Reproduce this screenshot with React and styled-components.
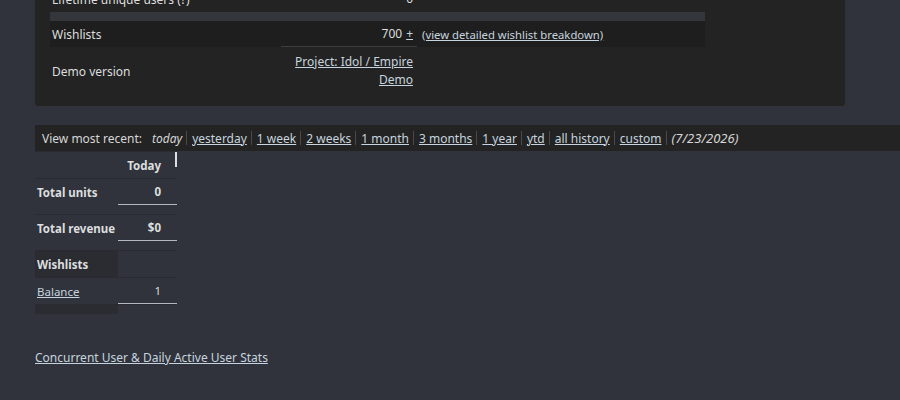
import styled, { createGlobalStyle } from 'styled-components'

const GlobalStyle = createGlobalStyle`
  html, body {
    margin: 0;
    padding: 0;
    background: #30333b;
    overflow: hidden;
  }
  body {
    font-family: 'Noto Sans', 'Open Sans', sans-serif;
    font-size: 12px;
    color: #dcdedf;
  }
`

const ranges = ['yesterday', '1 week', '2 weeks', '1 month', '3 months', '1 year', 'ytd', 'all history', 'custom']

export default function App() {
  return (
    <>
      <GlobalStyle />
      <Page>
        <Panel>
          <InfoTable>
            <InfoRow>
              <InfoLabel>Lifetime unique users (?)</InfoLabel>
              <InfoValue>0</InfoValue>
              <InfoExtra />
            </InfoRow>
            <Strip />
            <InfoRow dark>
              <InfoLabel>Wishlists</InfoLabel>
              <InfoValue inline>
                700 <Link>+</Link>
              </InfoValue>
              <InfoExtra>
                <Link>(view detailed wishlist breakdown)</Link>
              </InfoExtra>
            </InfoRow>
            <InfoRow tall>
              <InfoLabel>Demo version</InfoLabel>
              <InfoValue>
                <Link>Project: Idol / Empire</Link>
                <Link>Demo</Link>
              </InfoValue>
              <InfoExtra />
            </InfoRow>
          </InfoTable>
        </Panel>

        <RangeBar>
          <Lead>View most recent:</Lead>
          <Current>today</Current>
          {ranges.map((r) => (
            <RangeItem key={r}>
              <Link>{r}</Link>
            </RangeItem>
          ))}
          <RangeItem>
            <Current wide>(7/23/2026)</Current>
          </RangeItem>
        </RangeBar>

        <SalesTable>
          <SalesRow>
            <LabelCell />
            <HeadCell>
              <HeadText>Today</HeadText>
              <Marker />
            </HeadCell>
          </SalesRow>
          <SalesRow>
            <LabelCell bold>Total units</LabelCell>
            <ValueCell bold total>0</ValueCell>
          </SalesRow>
          <Spacer />
          <SalesRow>
            <LabelCell bold>Total revenue</LabelCell>
            <ValueCell bold total>$0</ValueCell>
          </SalesRow>
          <Spacer />
          <SalesRow>
            <LabelCell bold shaded>Wishlists</LabelCell>
            <ValueCell />
          </SalesRow>
          <SalesRow>
            <LabelCell><Link>Balance</Link></LabelCell>
            <ValueCell total>1</ValueCell>
          </SalesRow>
          <Footer>
            <LabelCell shaded />
          </Footer>
        </SalesTable>

        <StatsLink>Concurrent User &amp; Daily Active User Stats</StatsLink>
      </Page>
    </>
  )
}

const Page = styled.div`
  margin-top: -14px;
  padding-left: 35px;
`

const Panel = styled.div`
  width: 780px;
  padding: 0 15px 11px;
  background: #232323;
  border-radius: 0 0 3px 3px;
`

const InfoTable = styled.div`
  width: 655px;
`

const InfoRow = styled.div`
  display: flex;
  align-items: center;
  height: ${({ tall }) => (tall ? 48 : 26)}px;
  background: ${({ dark }) => (dark ? '#1e1e1e' : 'transparent')};
`

const InfoLabel = styled.div`
  width: 229px;
  padding-left: 2px;
  white-space: nowrap;
`

const InfoValue = styled.div`
  width: 132px;
  align-self: stretch;
  display: flex;
  flex-direction: ${({ inline }) => (inline ? 'row' : 'column')};
  align-items: ${({ inline }) => (inline ? 'center' : 'flex-end')};
  justify-content: ${({ inline }) => (inline ? 'flex-end' : 'center')};
  gap: ${({ inline }) => (inline ? 4 : 0)}px;
  padding-right: 4px;
  text-align: right;
  line-height: 18px;
  border-bottom: ${({ inline }) => (inline ? '1px solid #3d3d3d' : 'none')};
`

const InfoExtra = styled.div`
  flex: 1;
  padding-left: 5px;
  font-size: 11.3px;
  white-space: nowrap;
`

const Strip = styled.div`
  height: 9px;
  background: #35363b;
`

const Link = styled.a`
  color: #c6d4df;
  text-decoration: underline;
  cursor: pointer;
`

const RangeBar = styled.div`
  margin-top: 19px;
  height: 26px;
  display: flex;
  align-items: center;
  padding-left: 7px;
  background: #232323;
  color: #d6d7d8;
  gap: 4px;
  white-space: nowrap;
`

const Lead = styled.span`
  margin-right: 6px;
`

const Current = styled.span`
  font-style: italic;
  font-size: ${({ wide }) => (wide ? 13 : 12)}px;
`

const RangeItem = styled.span`
  display: flex;
  align-items: center;

  &::before {
    content: '';
    width: 1px;
    height: 14px;
    margin-right: 5px;
    background: #4a4a4a;
  }
`

const SalesTable = styled.div`
  width: 142px;
  font-size: 11.5px;
  white-space: nowrap;
`

const SalesRow = styled.div`
  display: flex;
  align-items: stretch;
  height: 26px;
  border-top: 1px solid #292b31;
`

const LabelCell = styled.div`
  width: 83px;
  display: flex;
  align-items: center;
  padding-left: 2px;
  box-sizing: border-box;
  font-weight: ${({ bold }) => (bold ? 700 : 400)};
  background: ${({ shaded }) => (shaded ? '#2a2c31' : 'transparent')};
`

const ValueCell = styled.div`
  width: 59px;
  display: flex;
  align-items: center;
  justify-content: flex-end;
  padding-right: 16px;
  box-sizing: border-box;
  font-weight: ${({ bold }) => (bold ? 700 : 400)};
  border-bottom: ${({ total }) => (total ? '1px solid #b5b9be' : 'none')};
`

const HeadCell = styled.div`
  width: 59px;
  display: flex;
  justify-content: flex-end;
  align-items: flex-start;
`

const HeadText = styled.span`
  margin: 6px 14px 0 0;
  font-weight: 700;
`

const Marker = styled.div`
  width: 2px;
  height: 15px;
  background: #dcdedf;
`

const Spacer = styled.div`
  height: 9px;
`

const Footer = styled.div`
  display: flex;
  height: 9px;
  border-top: 1px solid #292b31;
`

const StatsLink = styled(Link)`
  display: inline-block;
  margin-top: 35px;
`
